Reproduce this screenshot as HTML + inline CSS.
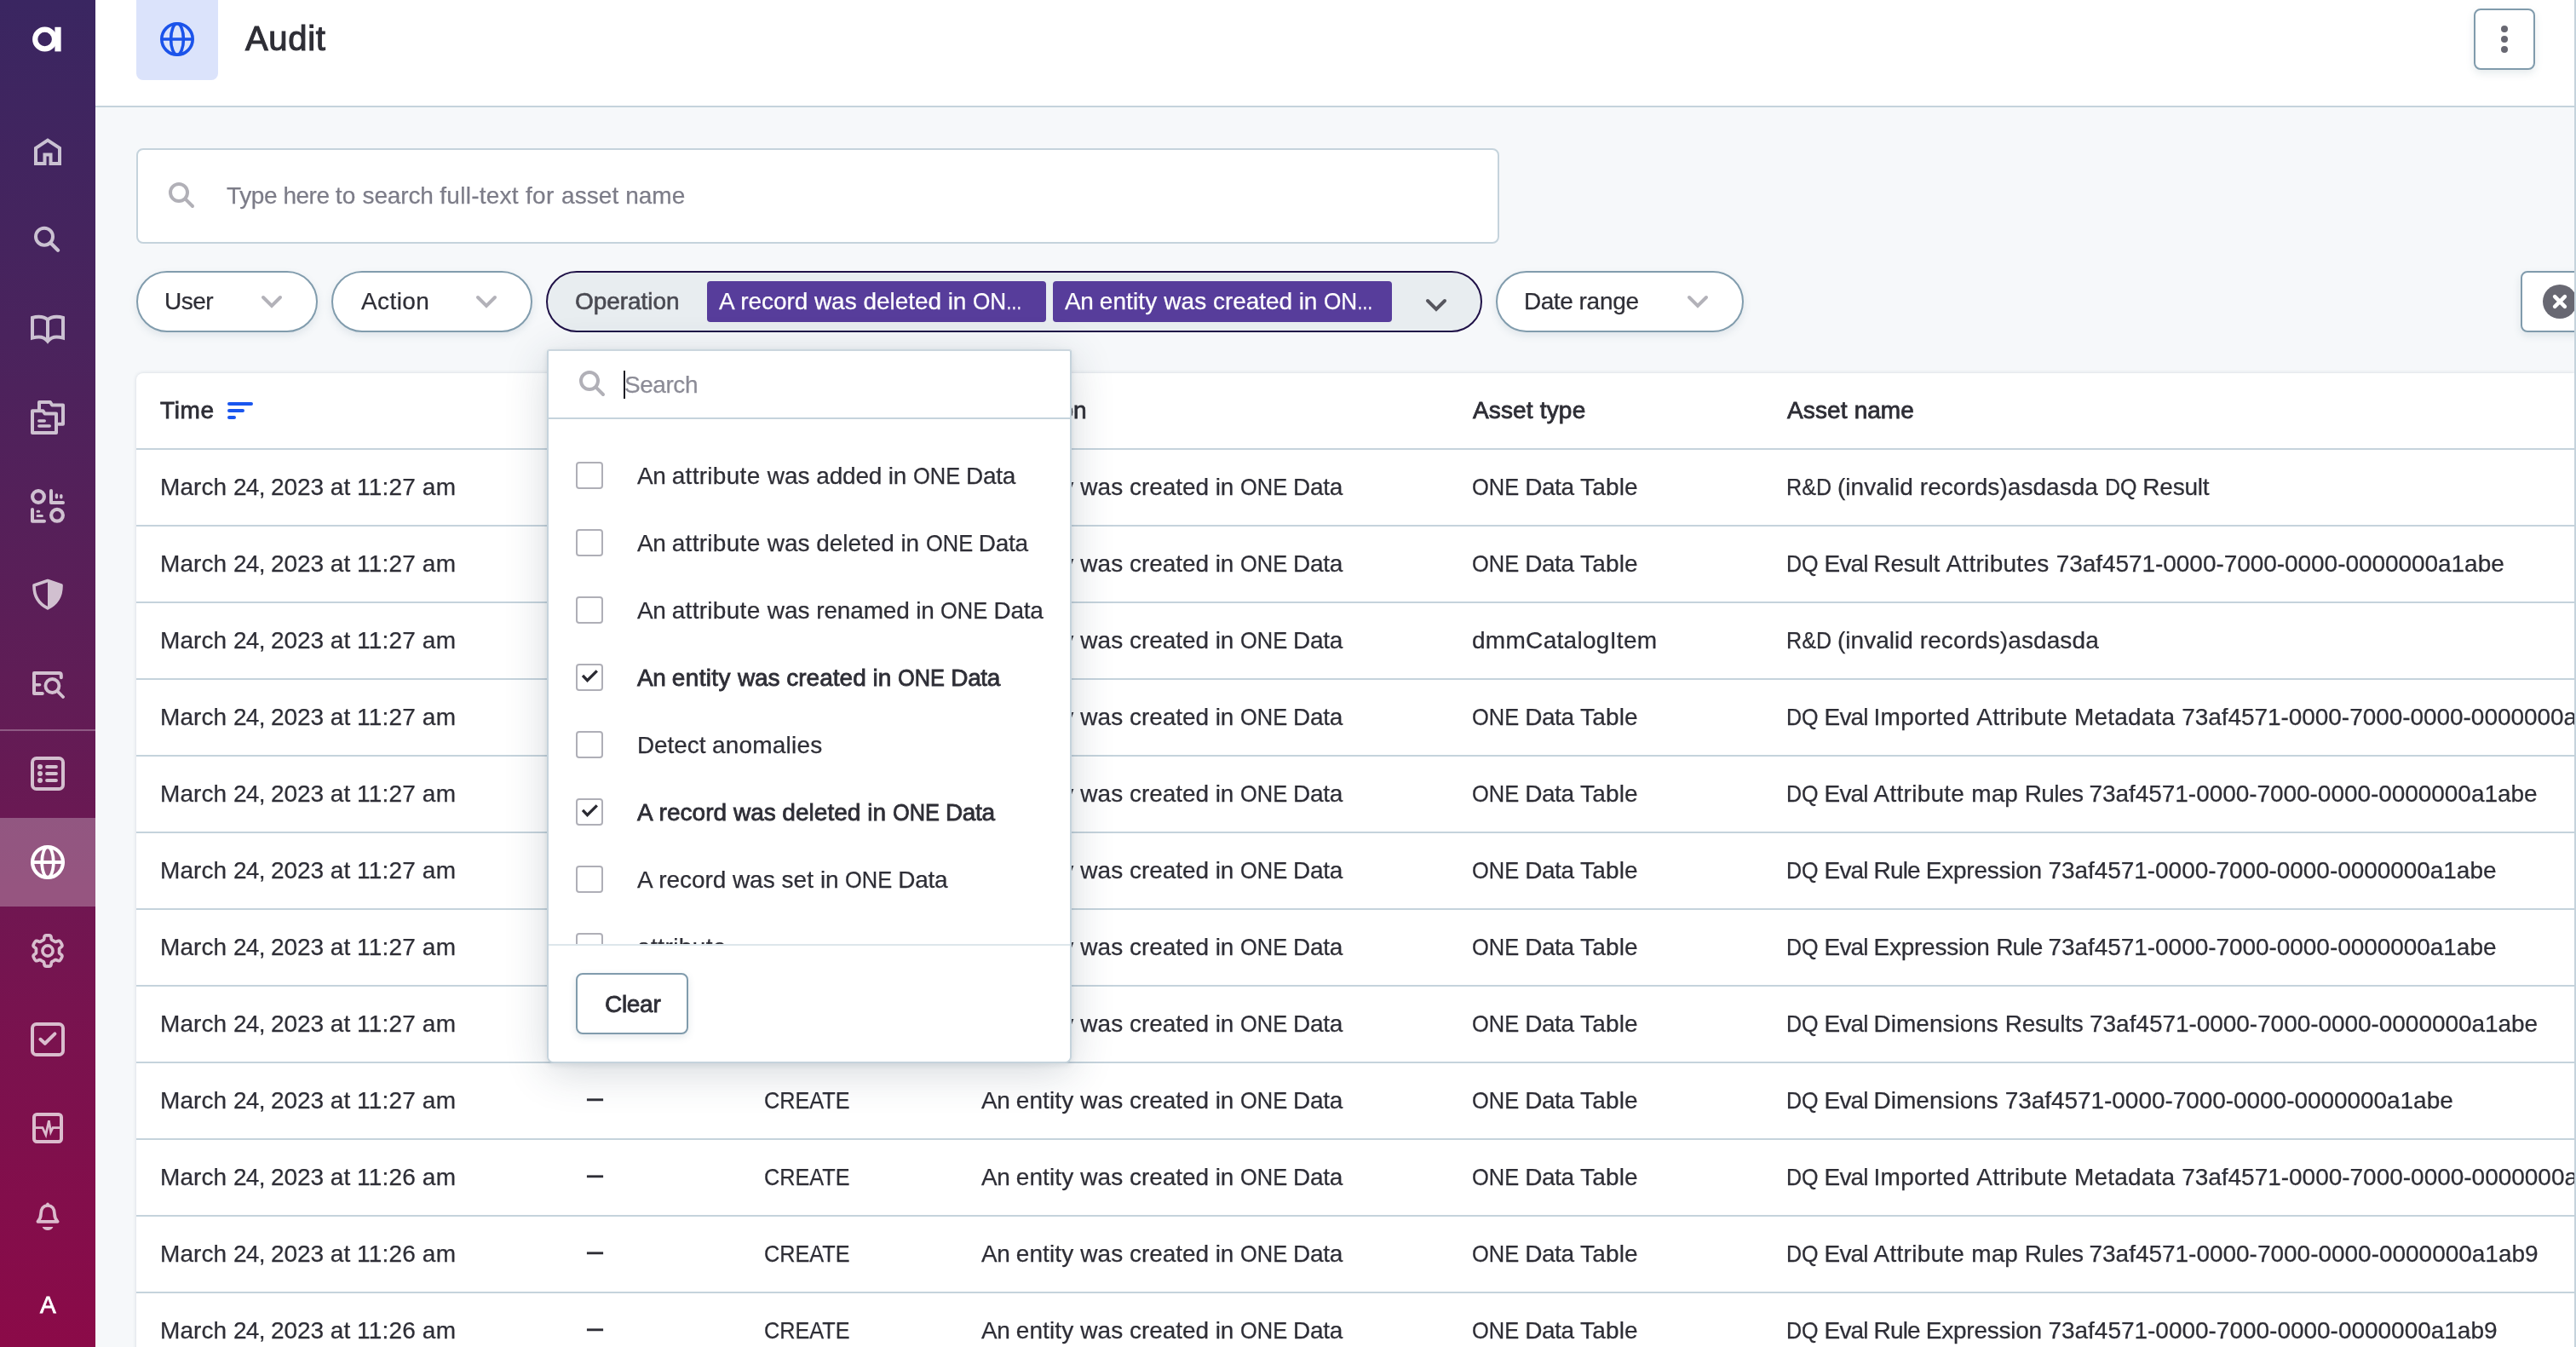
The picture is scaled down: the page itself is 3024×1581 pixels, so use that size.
<!DOCTYPE html>
<html lang="en"><head><meta charset="utf-8"><title>Audit</title>
<style>
html,body{margin:0;padding:0}
body{width:3024px;height:1581px;overflow:hidden;position:relative;background:#f6f8fa;font-family:"Liberation Sans",sans-serif;font-size:28px;color:#2e2e36}
.t{position:absolute;white-space:nowrap;will-change:transform;-webkit-text-stroke:0.25px}
#side{position:absolute;left:0;top:0;width:112px;height:1581px;background:linear-gradient(180deg,#3a2661 0%,#4a235d 25%,#5f1d56 50%,#78134f 75%,#8b0a48 100%)}
.si{position:absolute;left:32px}
#hdr{position:absolute;left:112px;top:0;width:2910px;height:124px;background:#fff;border-bottom:2px solid #c5d3dc}
#redge{position:absolute;left:3022px;top:0;width:2px;height:1581px;background:#c5d3dc}
#ibox{position:absolute;left:160px;top:-8px;width:96px;height:102px;border-radius:8px;background:#dbe3fb}
#kebab{position:absolute;left:2904px;top:10px;width:68px;height:68px;border:2px solid #809bac;border-radius:8px;background:#fff;box-shadow:0 4px 10px rgba(80,110,130,.14)}
#kebab i{position:absolute;left:30px;width:8px;height:8px;border-radius:4px;background:#686872}
#sbox{position:absolute;left:160px;top:174px;width:1596px;height:108px;border:2px solid #c5d3dc;border-radius:8px;background:#fff}
.pill{position:absolute;top:318px;height:68px;border:2px solid #819cad;border-radius:36px;background:#fff;box-shadow:0 4px 10px rgba(80,110,130,.13)}
#oppill{border-color:#1f1147;background:#e8edf0;box-shadow:none}
.chip{position:absolute;top:330px;height:48px;width:398px;border-radius:4px;background:#573d9b}
#clr{position:absolute;left:2959px;top:318px;width:80px;height:68px;border:2px solid #809bac;border-radius:8px;background:#fff;box-shadow:0 4px 10px rgba(80,110,130,.14)}
#table{position:absolute;left:160px;top:438px;width:2862px;height:1200px;background:#fff;border-top-left-radius:8px;box-shadow:0 0 4px rgba(90,110,130,.22)}
.rl{position:absolute;left:160px;width:2862px;height:2px;background:#c5d3dc}
#dd{position:absolute;left:642px;top:410px;width:612px;height:834px;background:#fff;border:2px solid #c5d3dc;border-top-color:#cbd6de;border-radius:3px 3px 8px 8px;box-shadow:0 2px 6px rgba(50,70,90,.12),0 10px 50px rgba(40,60,80,.2);overflow:hidden}
#dd .ln{position:absolute;left:0;width:612px;height:2px;background:#c5d3dc}
.cb{position:absolute;width:28px;height:28px;border:2px solid #afafb7;border-radius:4px;background:#fff}
#clear{position:absolute;left:32px;top:730px;width:128px;height:68px;border:2px solid #809bac;border-radius:8px;background:#fff;box-shadow:0 3px 8px rgba(80,110,130,.16)}
</style></head><body>

<div id="hdr"></div>
<div id="ibox"></div>
<svg style="position:absolute;left:184px;top:22px" width="48" height="48" viewBox="0 0 24 24" fill="none" stroke="#1b53ea" stroke-width="1.8"><circle cx="12" cy="12" r="9.1"/><ellipse cx="12" cy="12" rx="3.7" ry="9.1"/><path d="M3 12 H21"/></svg>
<div class="t" style="left:288px;top:21px;font-size:40px;line-height:48px;color:#2e2e36;"><span style="-webkit-text-stroke:0.8px currentColor;-webkit-text-stroke-width:1.1px;"><span style="letter-spacing:0.69px">Audit</span></span></div>
<div id="kebab"><i style="top:18px"></i><i style="top:30px"></i><i style="top:42px"></i></div>

<div id="sbox"></div>
<svg style="position:absolute;left:194px;top:210px;overflow:visible" width="40" height="40" viewBox="0 0 40 40" fill="none" stroke="#b1b0b7" stroke-width="4" stroke-linecap="round"><circle cx="16" cy="16" r="10"/><path d="M23.87 23.87 L32.00 32.00"/></svg>
<div class="t" style="left:266px;top:214px;font-size:28px;line-height:32px;color:#7c7c88;"><span style="letter-spacing:-0.40px">Type </span><span style="letter-spacing:-0.51px">here </span><span style="letter-spacing:0.22px">to </span><span style="letter-spacing:-0.15px">search </span><span style="letter-spacing:0.25px">full-text </span><span style="letter-spacing:0.42px">for </span><span style="letter-spacing:0.07px">asset </span><span style="letter-spacing:0.02px">name</span></div>

<div class="pill" style="left:160px;width:209px"></div>
<div class="t" style="left:193px;top:338px;font-size:28px;line-height:32px;color:#2e2e36;"><span style="letter-spacing:-0.54px">User</span></div>
<svg style="position:absolute;left:303px;top:342px" width="32" height="24" viewBox="0 0 32 24" fill="none" stroke="#b3b2b9" stroke-width="4" stroke-linecap="round" stroke-linejoin="miter"><path d="M6 7 L16 17 L26 7"/></svg>
<div class="pill" style="left:389px;width:232px"></div>
<div class="t" style="left:424px;top:338px;font-size:28px;line-height:32px;color:#2e2e36;"><span style="letter-spacing:0.42px">Action</span></div>
<svg style="position:absolute;left:555px;top:342px" width="32" height="24" viewBox="0 0 32 24" fill="none" stroke="#b3b2b9" stroke-width="4" stroke-linecap="round" stroke-linejoin="miter"><path d="M6 7 L16 17 L26 7"/></svg>
<div class="pill" id="oppill" style="left:641px;width:1095px"></div>
<div class="t" style="left:675px;top:338px;font-size:28px;line-height:32px;color:#4a4a52;"><span style="-webkit-text-stroke:0.8px currentColor;-webkit-text-stroke-width:0.6px;"><span style="letter-spacing:-0.06px">Operation</span></span></div>
<div class="chip" style="left:830px"></div>
<div class="t" style="left:844px;top:338px;font-size:28px;line-height:32px;color:#fff;"><span style="letter-spacing:0.15px">A </span><span style="letter-spacing:-0.07px">record </span><span style="letter-spacing:0.02px">was </span><span style="letter-spacing:-0.07px">deleted </span><span style="letter-spacing:-0.12px">in </span><span style="display:inline-block;transform:scaleX(0.9345);transform-origin:0 50%;margin-right:-2.75px">ON</span><span style="display:inline-block;transform:scaleX(0.6691);transform-origin:0 50%;margin-right:-9.27px">…</span></div>
<div class="chip" style="left:1236px"></div>
<div class="t" style="left:1250px;top:338px;font-size:28px;line-height:32px;color:#fff;"><span style="letter-spacing:-0.45px">An </span><span style="letter-spacing:0.13px">entity </span><span style="letter-spacing:0.02px">was </span><span style="letter-spacing:-0.06px">created </span><span style="letter-spacing:-0.12px">in </span><span style="display:inline-block;transform:scaleX(0.9345);transform-origin:0 50%;margin-right:-2.75px">ON</span><span style="display:inline-block;transform:scaleX(0.6691);transform-origin:0 50%;margin-right:-9.27px">…</span></div>
<svg style="position:absolute;left:1670px;top:346px" width="32" height="24" viewBox="0 0 32 24" fill="none" stroke="#56565e" stroke-width="4" stroke-linecap="round" stroke-linejoin="miter"><path d="M6 7 L16 17 L26 7"/></svg>
<div class="pill" style="left:1756px;width:287px"></div>
<div class="t" style="left:1789px;top:338px;font-size:28px;line-height:32px;color:#2e2e36;"><span style="letter-spacing:-0.47px">Date </span><span style="letter-spacing:-0.28px">range</span></div>
<svg style="position:absolute;left:1977px;top:342px" width="32" height="24" viewBox="0 0 32 24" fill="none" stroke="#b3b2b9" stroke-width="4" stroke-linecap="round" stroke-linejoin="miter"><path d="M6 7 L16 17 L26 7"/></svg>
<div id="clr"></div>
<svg style="position:absolute;left:2985px;top:334px" width="40" height="40" viewBox="0 0 40 40"><circle cx="20" cy="20" r="20" fill="#686872"/><path d="M14.1 14.1 L25.9 25.9 M25.9 14.1 L14.1 25.9" stroke="#fff" stroke-width="4.5" stroke-linecap="round"/></svg>

<div id="table"></div>
<div class="t" style="left:188.0px;top:466px;font-size:28px;line-height:32px;color:#2e2e36;"><span style="-webkit-text-stroke:0.8px currentColor;"><span style="letter-spacing:0.60px">Time</span></span></div>
<svg style="position:absolute;left:264px;top:468px" width="36" height="28" viewBox="0 0 36 28" fill="none" stroke="#1a56ee" stroke-width="4" stroke-linecap="round"><path d="M5 6 H31 M5 14 H21 M5 22 H11"/></svg>
<div class="t" style="left:688.5px;top:466px;font-size:28px;line-height:32px;color:#2e2e36;"><span style="-webkit-text-stroke:0.8px currentColor;"><span style="letter-spacing:-0.37px">User</span></span></div>
<div class="t" style="left:897px;top:466px;font-size:28px;line-height:32px;color:#2e2e36;"><span style="-webkit-text-stroke:0.8px currentColor;"><span style="letter-spacing:0.55px">Action</span></span></div>
<div class="t" style="left:1152.5px;top:466px;font-size:28px;line-height:32px;color:#2e2e36;"><span style="-webkit-text-stroke:0.8px currentColor;"><span style="letter-spacing:-0.06px">Operation</span></span></div>
<div class="t" style="left:1729px;top:466px;font-size:28px;line-height:32px;color:#2e2e36;"><span style="-webkit-text-stroke:0.8px currentColor;"><span style="letter-spacing:0.14px">Asset </span><span style="letter-spacing:0.21px">type</span></span></div>
<div class="t" style="left:2097.5px;top:466px;font-size:28px;line-height:32px;color:#2e2e36;"><span style="-webkit-text-stroke:0.8px currentColor;"><span style="letter-spacing:0.14px">Asset </span><span style="letter-spacing:0.01px">name</span></span></div>
<div class="rl" style="top:526px"></div>
<div class="t" style="left:187.5px;top:556px;font-size:28px;line-height:32px;color:#2e2e36;"><span style="letter-spacing:0.06px">March </span><span style="letter-spacing:-0.69px">24, </span><span style="letter-spacing:-0.04px">2023 </span><span style="letter-spacing:0.07px">at </span><span style="letter-spacing:0.15px">11:27 </span><span style="letter-spacing:0.45px">am</span></div>
<div class="t" style="left:688.5px;top:556px;font-size:28px;line-height:32px;color:#2e2e36;"><span style="display:inline-block;position:relative;top:-3px;transform:scale(0.68,1.2);transform-origin:0 62%">—</span></div>
<div class="t" style="left:897px;top:556px;font-size:28px;line-height:32px;color:#2e2e36;"><span style="display:inline-block;transform:scaleX(0.9015);transform-origin:0 50%;margin-right:-10.98px">CREATE</span></div>
<div class="t" style="left:1152px;top:556px;font-size:28px;line-height:32px;color:#2e2e36;"><span style="letter-spacing:-0.45px">An </span><span style="letter-spacing:0.13px">entity </span><span style="letter-spacing:0.02px">was </span><span style="letter-spacing:-0.06px">created </span><span style="letter-spacing:-0.12px">in </span><span style="display:inline-block;transform:scaleX(0.9089);transform-origin:0 50%;margin-right:-5.53px">ONE</span><span style="letter-spacing:-0.83px"> </span><span style="letter-spacing:-0.29px">Data</span></div>
<div class="t" style="left:1728px;top:556px;font-size:28px;line-height:32px;color:#2e2e36;"><span style="display:inline-block;transform:scaleX(0.9089);transform-origin:0 50%;margin-right:-5.53px">ONE</span><span style="letter-spacing:-0.83px"> </span><span style="letter-spacing:-0.40px">Data </span><span style="letter-spacing:0.17px">Table</span></div>
<div class="t" style="left:2097px;top:556px;font-size:28px;line-height:32px;color:#2e2e36;"><span style="display:inline-block;transform:scaleX(0.8972);transform-origin:0 50%;margin-right:-6.08px">R&amp;D</span><span style="letter-spacing:-0.83px"> </span><span style="letter-spacing:0.03px">(invalid </span><span style="letter-spacing:0.04px">records)asdasda </span><span style="display:inline-block;transform:scaleX(0.8962);transform-origin:0 50%;margin-right:-4.36px">DQ</span><span style="letter-spacing:-0.83px"> </span><span style="letter-spacing:-0.23px">Result</span></div>
<div class="rl" style="top:616px"></div>
<div class="t" style="left:187.5px;top:646px;font-size:28px;line-height:32px;color:#2e2e36;"><span style="letter-spacing:0.06px">March </span><span style="letter-spacing:-0.69px">24, </span><span style="letter-spacing:-0.04px">2023 </span><span style="letter-spacing:0.07px">at </span><span style="letter-spacing:0.15px">11:27 </span><span style="letter-spacing:0.45px">am</span></div>
<div class="t" style="left:688.5px;top:646px;font-size:28px;line-height:32px;color:#2e2e36;"><span style="display:inline-block;position:relative;top:-3px;transform:scale(0.68,1.2);transform-origin:0 62%">—</span></div>
<div class="t" style="left:897px;top:646px;font-size:28px;line-height:32px;color:#2e2e36;"><span style="display:inline-block;transform:scaleX(0.9015);transform-origin:0 50%;margin-right:-10.98px">CREATE</span></div>
<div class="t" style="left:1152px;top:646px;font-size:28px;line-height:32px;color:#2e2e36;"><span style="letter-spacing:-0.45px">An </span><span style="letter-spacing:0.13px">entity </span><span style="letter-spacing:0.02px">was </span><span style="letter-spacing:-0.06px">created </span><span style="letter-spacing:-0.12px">in </span><span style="display:inline-block;transform:scaleX(0.9089);transform-origin:0 50%;margin-right:-5.53px">ONE</span><span style="letter-spacing:-0.83px"> </span><span style="letter-spacing:-0.29px">Data</span></div>
<div class="t" style="left:1728px;top:646px;font-size:28px;line-height:32px;color:#2e2e36;"><span style="display:inline-block;transform:scaleX(0.9089);transform-origin:0 50%;margin-right:-5.53px">ONE</span><span style="letter-spacing:-0.83px"> </span><span style="letter-spacing:-0.40px">Data </span><span style="letter-spacing:0.17px">Table</span></div>
<div class="t" style="left:2097px;top:646px;font-size:28px;line-height:32px;color:#2e2e36;"><span style="display:inline-block;transform:scaleX(0.8962);transform-origin:0 50%;margin-right:-4.36px">DQ</span><span style="letter-spacing:-0.83px"> </span><span style="letter-spacing:-0.87px">Eval </span><span style="letter-spacing:-0.32px">Result </span><span style="letter-spacing:0.29px">Attributes </span><span style="letter-spacing:-0.05px">73af4571-0000-7000-0000-0000000a1abe</span></div>
<div class="rl" style="top:706px"></div>
<div class="t" style="left:187.5px;top:736px;font-size:28px;line-height:32px;color:#2e2e36;"><span style="letter-spacing:0.06px">March </span><span style="letter-spacing:-0.69px">24, </span><span style="letter-spacing:-0.04px">2023 </span><span style="letter-spacing:0.07px">at </span><span style="letter-spacing:0.15px">11:27 </span><span style="letter-spacing:0.45px">am</span></div>
<div class="t" style="left:688.5px;top:736px;font-size:28px;line-height:32px;color:#2e2e36;"><span style="display:inline-block;position:relative;top:-3px;transform:scale(0.68,1.2);transform-origin:0 62%">—</span></div>
<div class="t" style="left:897px;top:736px;font-size:28px;line-height:32px;color:#2e2e36;"><span style="display:inline-block;transform:scaleX(0.9015);transform-origin:0 50%;margin-right:-10.98px">CREATE</span></div>
<div class="t" style="left:1152px;top:736px;font-size:28px;line-height:32px;color:#2e2e36;"><span style="letter-spacing:-0.45px">An </span><span style="letter-spacing:0.13px">entity </span><span style="letter-spacing:0.02px">was </span><span style="letter-spacing:-0.06px">created </span><span style="letter-spacing:-0.12px">in </span><span style="display:inline-block;transform:scaleX(0.9089);transform-origin:0 50%;margin-right:-5.53px">ONE</span><span style="letter-spacing:-0.83px"> </span><span style="letter-spacing:-0.29px">Data</span></div>
<div class="t" style="left:1728px;top:736px;font-size:28px;line-height:32px;color:#2e2e36;"><span style="letter-spacing:0.30px">dmmCatalogItem</span></div>
<div class="t" style="left:2097px;top:736px;font-size:28px;line-height:32px;color:#2e2e36;"><span style="display:inline-block;transform:scaleX(0.8972);transform-origin:0 50%;margin-right:-6.08px">R&amp;D</span><span style="letter-spacing:-0.83px"> </span><span style="letter-spacing:0.03px">(invalid </span><span style="letter-spacing:0.10px">records)asdasda</span></div>
<div class="rl" style="top:796px"></div>
<div class="t" style="left:187.5px;top:826px;font-size:28px;line-height:32px;color:#2e2e36;"><span style="letter-spacing:0.06px">March </span><span style="letter-spacing:-0.69px">24, </span><span style="letter-spacing:-0.04px">2023 </span><span style="letter-spacing:0.07px">at </span><span style="letter-spacing:0.15px">11:27 </span><span style="letter-spacing:0.45px">am</span></div>
<div class="t" style="left:688.5px;top:826px;font-size:28px;line-height:32px;color:#2e2e36;"><span style="display:inline-block;position:relative;top:-3px;transform:scale(0.68,1.2);transform-origin:0 62%">—</span></div>
<div class="t" style="left:897px;top:826px;font-size:28px;line-height:32px;color:#2e2e36;"><span style="display:inline-block;transform:scaleX(0.9015);transform-origin:0 50%;margin-right:-10.98px">CREATE</span></div>
<div class="t" style="left:1152px;top:826px;font-size:28px;line-height:32px;color:#2e2e36;"><span style="letter-spacing:-0.45px">An </span><span style="letter-spacing:0.13px">entity </span><span style="letter-spacing:0.02px">was </span><span style="letter-spacing:-0.06px">created </span><span style="letter-spacing:-0.12px">in </span><span style="display:inline-block;transform:scaleX(0.9089);transform-origin:0 50%;margin-right:-5.53px">ONE</span><span style="letter-spacing:-0.83px"> </span><span style="letter-spacing:-0.29px">Data</span></div>
<div class="t" style="left:1728px;top:826px;font-size:28px;line-height:32px;color:#2e2e36;"><span style="display:inline-block;transform:scaleX(0.9089);transform-origin:0 50%;margin-right:-5.53px">ONE</span><span style="letter-spacing:-0.83px"> </span><span style="letter-spacing:-0.40px">Data </span><span style="letter-spacing:0.17px">Table</span></div>
<div class="t" style="left:2097px;top:826px;font-size:28px;line-height:32px;color:#2e2e36;"><span style="display:inline-block;transform:scaleX(0.8962);transform-origin:0 50%;margin-right:-4.36px">DQ</span><span style="letter-spacing:-0.83px"> </span><span style="letter-spacing:-0.87px">Eval </span><span style="letter-spacing:0.28px">Imported </span><span style="letter-spacing:0.27px">Attribute </span><span style="letter-spacing:0.17px">Metadata </span><span style="letter-spacing:-0.05px">73af4571-0000-7000-0000-0000000a1abe</span></div>
<div class="rl" style="top:886px"></div>
<div class="t" style="left:187.5px;top:916px;font-size:28px;line-height:32px;color:#2e2e36;"><span style="letter-spacing:0.06px">March </span><span style="letter-spacing:-0.69px">24, </span><span style="letter-spacing:-0.04px">2023 </span><span style="letter-spacing:0.07px">at </span><span style="letter-spacing:0.15px">11:27 </span><span style="letter-spacing:0.45px">am</span></div>
<div class="t" style="left:688.5px;top:916px;font-size:28px;line-height:32px;color:#2e2e36;"><span style="display:inline-block;position:relative;top:-3px;transform:scale(0.68,1.2);transform-origin:0 62%">—</span></div>
<div class="t" style="left:897px;top:916px;font-size:28px;line-height:32px;color:#2e2e36;"><span style="display:inline-block;transform:scaleX(0.9015);transform-origin:0 50%;margin-right:-10.98px">CREATE</span></div>
<div class="t" style="left:1152px;top:916px;font-size:28px;line-height:32px;color:#2e2e36;"><span style="letter-spacing:-0.45px">An </span><span style="letter-spacing:0.13px">entity </span><span style="letter-spacing:0.02px">was </span><span style="letter-spacing:-0.06px">created </span><span style="letter-spacing:-0.12px">in </span><span style="display:inline-block;transform:scaleX(0.9089);transform-origin:0 50%;margin-right:-5.53px">ONE</span><span style="letter-spacing:-0.83px"> </span><span style="letter-spacing:-0.29px">Data</span></div>
<div class="t" style="left:1728px;top:916px;font-size:28px;line-height:32px;color:#2e2e36;"><span style="display:inline-block;transform:scaleX(0.9089);transform-origin:0 50%;margin-right:-5.53px">ONE</span><span style="letter-spacing:-0.83px"> </span><span style="letter-spacing:-0.40px">Data </span><span style="letter-spacing:0.17px">Table</span></div>
<div class="t" style="left:2097px;top:916px;font-size:28px;line-height:32px;color:#2e2e36;"><span style="display:inline-block;transform:scaleX(0.8962);transform-origin:0 50%;margin-right:-4.36px">DQ</span><span style="letter-spacing:-0.83px"> </span><span style="letter-spacing:-0.87px">Eval </span><span style="letter-spacing:0.27px">Attribute </span><span style="letter-spacing:0.05px">map </span><span style="letter-spacing:-0.60px">Rules </span><span style="letter-spacing:-0.05px">73af4571-0000-7000-0000-0000000a1abe</span></div>
<div class="rl" style="top:976px"></div>
<div class="t" style="left:187.5px;top:1006px;font-size:28px;line-height:32px;color:#2e2e36;"><span style="letter-spacing:0.06px">March </span><span style="letter-spacing:-0.69px">24, </span><span style="letter-spacing:-0.04px">2023 </span><span style="letter-spacing:0.07px">at </span><span style="letter-spacing:0.15px">11:27 </span><span style="letter-spacing:0.45px">am</span></div>
<div class="t" style="left:688.5px;top:1006px;font-size:28px;line-height:32px;color:#2e2e36;"><span style="display:inline-block;position:relative;top:-3px;transform:scale(0.68,1.2);transform-origin:0 62%">—</span></div>
<div class="t" style="left:897px;top:1006px;font-size:28px;line-height:32px;color:#2e2e36;"><span style="display:inline-block;transform:scaleX(0.9015);transform-origin:0 50%;margin-right:-10.98px">CREATE</span></div>
<div class="t" style="left:1152px;top:1006px;font-size:28px;line-height:32px;color:#2e2e36;"><span style="letter-spacing:-0.45px">An </span><span style="letter-spacing:0.13px">entity </span><span style="letter-spacing:0.02px">was </span><span style="letter-spacing:-0.06px">created </span><span style="letter-spacing:-0.12px">in </span><span style="display:inline-block;transform:scaleX(0.9089);transform-origin:0 50%;margin-right:-5.53px">ONE</span><span style="letter-spacing:-0.83px"> </span><span style="letter-spacing:-0.29px">Data</span></div>
<div class="t" style="left:1728px;top:1006px;font-size:28px;line-height:32px;color:#2e2e36;"><span style="display:inline-block;transform:scaleX(0.9089);transform-origin:0 50%;margin-right:-5.53px">ONE</span><span style="letter-spacing:-0.83px"> </span><span style="letter-spacing:-0.40px">Data </span><span style="letter-spacing:0.17px">Table</span></div>
<div class="t" style="left:2097px;top:1006px;font-size:28px;line-height:32px;color:#2e2e36;"><span style="display:inline-block;transform:scaleX(0.8962);transform-origin:0 50%;margin-right:-4.36px">DQ</span><span style="letter-spacing:-0.83px"> </span><span style="letter-spacing:-0.87px">Eval </span><span style="letter-spacing:-0.82px">Rule </span><span style="letter-spacing:-0.24px">Expression </span><span style="letter-spacing:-0.05px">73af4571-0000-7000-0000-0000000a1abe</span></div>
<div class="rl" style="top:1066px"></div>
<div class="t" style="left:187.5px;top:1096px;font-size:28px;line-height:32px;color:#2e2e36;"><span style="letter-spacing:0.06px">March </span><span style="letter-spacing:-0.69px">24, </span><span style="letter-spacing:-0.04px">2023 </span><span style="letter-spacing:0.07px">at </span><span style="letter-spacing:0.15px">11:27 </span><span style="letter-spacing:0.45px">am</span></div>
<div class="t" style="left:688.5px;top:1096px;font-size:28px;line-height:32px;color:#2e2e36;"><span style="display:inline-block;position:relative;top:-3px;transform:scale(0.68,1.2);transform-origin:0 62%">—</span></div>
<div class="t" style="left:897px;top:1096px;font-size:28px;line-height:32px;color:#2e2e36;"><span style="display:inline-block;transform:scaleX(0.9015);transform-origin:0 50%;margin-right:-10.98px">CREATE</span></div>
<div class="t" style="left:1152px;top:1096px;font-size:28px;line-height:32px;color:#2e2e36;"><span style="letter-spacing:-0.45px">An </span><span style="letter-spacing:0.13px">entity </span><span style="letter-spacing:0.02px">was </span><span style="letter-spacing:-0.06px">created </span><span style="letter-spacing:-0.12px">in </span><span style="display:inline-block;transform:scaleX(0.9089);transform-origin:0 50%;margin-right:-5.53px">ONE</span><span style="letter-spacing:-0.83px"> </span><span style="letter-spacing:-0.29px">Data</span></div>
<div class="t" style="left:1728px;top:1096px;font-size:28px;line-height:32px;color:#2e2e36;"><span style="display:inline-block;transform:scaleX(0.9089);transform-origin:0 50%;margin-right:-5.53px">ONE</span><span style="letter-spacing:-0.83px"> </span><span style="letter-spacing:-0.40px">Data </span><span style="letter-spacing:0.17px">Table</span></div>
<div class="t" style="left:2097px;top:1096px;font-size:28px;line-height:32px;color:#2e2e36;"><span style="display:inline-block;transform:scaleX(0.8962);transform-origin:0 50%;margin-right:-4.36px">DQ</span><span style="letter-spacing:-0.83px"> </span><span style="letter-spacing:-0.87px">Eval </span><span style="letter-spacing:-0.24px">Expression </span><span style="letter-spacing:-0.82px">Rule </span><span style="letter-spacing:-0.05px">73af4571-0000-7000-0000-0000000a1abe</span></div>
<div class="rl" style="top:1156px"></div>
<div class="t" style="left:187.5px;top:1186px;font-size:28px;line-height:32px;color:#2e2e36;"><span style="letter-spacing:0.06px">March </span><span style="letter-spacing:-0.69px">24, </span><span style="letter-spacing:-0.04px">2023 </span><span style="letter-spacing:0.07px">at </span><span style="letter-spacing:0.15px">11:27 </span><span style="letter-spacing:0.45px">am</span></div>
<div class="t" style="left:688.5px;top:1186px;font-size:28px;line-height:32px;color:#2e2e36;"><span style="display:inline-block;position:relative;top:-3px;transform:scale(0.68,1.2);transform-origin:0 62%">—</span></div>
<div class="t" style="left:897px;top:1186px;font-size:28px;line-height:32px;color:#2e2e36;"><span style="display:inline-block;transform:scaleX(0.9015);transform-origin:0 50%;margin-right:-10.98px">CREATE</span></div>
<div class="t" style="left:1152px;top:1186px;font-size:28px;line-height:32px;color:#2e2e36;"><span style="letter-spacing:-0.45px">An </span><span style="letter-spacing:0.13px">entity </span><span style="letter-spacing:0.02px">was </span><span style="letter-spacing:-0.06px">created </span><span style="letter-spacing:-0.12px">in </span><span style="display:inline-block;transform:scaleX(0.9089);transform-origin:0 50%;margin-right:-5.53px">ONE</span><span style="letter-spacing:-0.83px"> </span><span style="letter-spacing:-0.29px">Data</span></div>
<div class="t" style="left:1728px;top:1186px;font-size:28px;line-height:32px;color:#2e2e36;"><span style="display:inline-block;transform:scaleX(0.9089);transform-origin:0 50%;margin-right:-5.53px">ONE</span><span style="letter-spacing:-0.83px"> </span><span style="letter-spacing:-0.40px">Data </span><span style="letter-spacing:0.17px">Table</span></div>
<div class="t" style="left:2097px;top:1186px;font-size:28px;line-height:32px;color:#2e2e36;"><span style="display:inline-block;transform:scaleX(0.8962);transform-origin:0 50%;margin-right:-4.36px">DQ</span><span style="letter-spacing:-0.83px"> </span><span style="letter-spacing:-0.87px">Eval </span><span style="letter-spacing:0.01px">Dimensions </span><span style="letter-spacing:-0.22px">Results </span><span style="letter-spacing:-0.05px">73af4571-0000-7000-0000-0000000a1abe</span></div>
<div class="rl" style="top:1246px"></div>
<div class="t" style="left:187.5px;top:1276px;font-size:28px;line-height:32px;color:#2e2e36;"><span style="letter-spacing:0.06px">March </span><span style="letter-spacing:-0.69px">24, </span><span style="letter-spacing:-0.04px">2023 </span><span style="letter-spacing:0.07px">at </span><span style="letter-spacing:0.15px">11:27 </span><span style="letter-spacing:0.45px">am</span></div>
<div class="t" style="left:688.5px;top:1276px;font-size:28px;line-height:32px;color:#2e2e36;"><span style="display:inline-block;position:relative;top:-3px;transform:scale(0.68,1.2);transform-origin:0 62%">—</span></div>
<div class="t" style="left:897px;top:1276px;font-size:28px;line-height:32px;color:#2e2e36;"><span style="display:inline-block;transform:scaleX(0.9015);transform-origin:0 50%;margin-right:-10.98px">CREATE</span></div>
<div class="t" style="left:1152px;top:1276px;font-size:28px;line-height:32px;color:#2e2e36;"><span style="letter-spacing:-0.45px">An </span><span style="letter-spacing:0.13px">entity </span><span style="letter-spacing:0.02px">was </span><span style="letter-spacing:-0.06px">created </span><span style="letter-spacing:-0.12px">in </span><span style="display:inline-block;transform:scaleX(0.9089);transform-origin:0 50%;margin-right:-5.53px">ONE</span><span style="letter-spacing:-0.83px"> </span><span style="letter-spacing:-0.29px">Data</span></div>
<div class="t" style="left:1728px;top:1276px;font-size:28px;line-height:32px;color:#2e2e36;"><span style="display:inline-block;transform:scaleX(0.9089);transform-origin:0 50%;margin-right:-5.53px">ONE</span><span style="letter-spacing:-0.83px"> </span><span style="letter-spacing:-0.40px">Data </span><span style="letter-spacing:0.17px">Table</span></div>
<div class="t" style="left:2097px;top:1276px;font-size:28px;line-height:32px;color:#2e2e36;"><span style="display:inline-block;transform:scaleX(0.8962);transform-origin:0 50%;margin-right:-4.36px">DQ</span><span style="letter-spacing:-0.83px"> </span><span style="letter-spacing:-0.87px">Eval </span><span style="letter-spacing:0.01px">Dimensions </span><span style="letter-spacing:-0.05px">73af4571-0000-7000-0000-0000000a1abe</span></div>
<div class="rl" style="top:1336px"></div>
<div class="t" style="left:187.5px;top:1366px;font-size:28px;line-height:32px;color:#2e2e36;"><span style="letter-spacing:0.06px">March </span><span style="letter-spacing:-0.69px">24, </span><span style="letter-spacing:-0.04px">2023 </span><span style="letter-spacing:0.07px">at </span><span style="letter-spacing:0.15px">11:26 </span><span style="letter-spacing:0.45px">am</span></div>
<div class="t" style="left:688.5px;top:1366px;font-size:28px;line-height:32px;color:#2e2e36;"><span style="display:inline-block;position:relative;top:-3px;transform:scale(0.68,1.2);transform-origin:0 62%">—</span></div>
<div class="t" style="left:897px;top:1366px;font-size:28px;line-height:32px;color:#2e2e36;"><span style="display:inline-block;transform:scaleX(0.9015);transform-origin:0 50%;margin-right:-10.98px">CREATE</span></div>
<div class="t" style="left:1152px;top:1366px;font-size:28px;line-height:32px;color:#2e2e36;"><span style="letter-spacing:-0.45px">An </span><span style="letter-spacing:0.13px">entity </span><span style="letter-spacing:0.02px">was </span><span style="letter-spacing:-0.06px">created </span><span style="letter-spacing:-0.12px">in </span><span style="display:inline-block;transform:scaleX(0.9089);transform-origin:0 50%;margin-right:-5.53px">ONE</span><span style="letter-spacing:-0.83px"> </span><span style="letter-spacing:-0.29px">Data</span></div>
<div class="t" style="left:1728px;top:1366px;font-size:28px;line-height:32px;color:#2e2e36;"><span style="display:inline-block;transform:scaleX(0.9089);transform-origin:0 50%;margin-right:-5.53px">ONE</span><span style="letter-spacing:-0.83px"> </span><span style="letter-spacing:-0.40px">Data </span><span style="letter-spacing:0.17px">Table</span></div>
<div class="t" style="left:2097px;top:1366px;font-size:28px;line-height:32px;color:#2e2e36;"><span style="display:inline-block;transform:scaleX(0.8962);transform-origin:0 50%;margin-right:-4.36px">DQ</span><span style="letter-spacing:-0.83px"> </span><span style="letter-spacing:-0.87px">Eval </span><span style="letter-spacing:0.28px">Imported </span><span style="letter-spacing:0.27px">Attribute </span><span style="letter-spacing:0.17px">Metadata </span><span style="letter-spacing:-0.02px">73af4571-0000-7000-0000-0000000a1ab9</span></div>
<div class="rl" style="top:1426px"></div>
<div class="t" style="left:187.5px;top:1456px;font-size:28px;line-height:32px;color:#2e2e36;"><span style="letter-spacing:0.06px">March </span><span style="letter-spacing:-0.69px">24, </span><span style="letter-spacing:-0.04px">2023 </span><span style="letter-spacing:0.07px">at </span><span style="letter-spacing:0.15px">11:26 </span><span style="letter-spacing:0.45px">am</span></div>
<div class="t" style="left:688.5px;top:1456px;font-size:28px;line-height:32px;color:#2e2e36;"><span style="display:inline-block;position:relative;top:-3px;transform:scale(0.68,1.2);transform-origin:0 62%">—</span></div>
<div class="t" style="left:897px;top:1456px;font-size:28px;line-height:32px;color:#2e2e36;"><span style="display:inline-block;transform:scaleX(0.9015);transform-origin:0 50%;margin-right:-10.98px">CREATE</span></div>
<div class="t" style="left:1152px;top:1456px;font-size:28px;line-height:32px;color:#2e2e36;"><span style="letter-spacing:-0.45px">An </span><span style="letter-spacing:0.13px">entity </span><span style="letter-spacing:0.02px">was </span><span style="letter-spacing:-0.06px">created </span><span style="letter-spacing:-0.12px">in </span><span style="display:inline-block;transform:scaleX(0.9089);transform-origin:0 50%;margin-right:-5.53px">ONE</span><span style="letter-spacing:-0.83px"> </span><span style="letter-spacing:-0.29px">Data</span></div>
<div class="t" style="left:1728px;top:1456px;font-size:28px;line-height:32px;color:#2e2e36;"><span style="display:inline-block;transform:scaleX(0.9089);transform-origin:0 50%;margin-right:-5.53px">ONE</span><span style="letter-spacing:-0.83px"> </span><span style="letter-spacing:-0.40px">Data </span><span style="letter-spacing:0.17px">Table</span></div>
<div class="t" style="left:2097px;top:1456px;font-size:28px;line-height:32px;color:#2e2e36;"><span style="display:inline-block;transform:scaleX(0.8962);transform-origin:0 50%;margin-right:-4.36px">DQ</span><span style="letter-spacing:-0.83px"> </span><span style="letter-spacing:-0.87px">Eval </span><span style="letter-spacing:0.27px">Attribute </span><span style="letter-spacing:0.05px">map </span><span style="letter-spacing:-0.60px">Rules </span><span style="letter-spacing:-0.02px">73af4571-0000-7000-0000-0000000a1ab9</span></div>
<div class="rl" style="top:1516px"></div>
<div class="t" style="left:187.5px;top:1546px;font-size:28px;line-height:32px;color:#2e2e36;"><span style="letter-spacing:0.06px">March </span><span style="letter-spacing:-0.69px">24, </span><span style="letter-spacing:-0.04px">2023 </span><span style="letter-spacing:0.07px">at </span><span style="letter-spacing:0.15px">11:26 </span><span style="letter-spacing:0.45px">am</span></div>
<div class="t" style="left:688.5px;top:1546px;font-size:28px;line-height:32px;color:#2e2e36;"><span style="display:inline-block;position:relative;top:-3px;transform:scale(0.68,1.2);transform-origin:0 62%">—</span></div>
<div class="t" style="left:897px;top:1546px;font-size:28px;line-height:32px;color:#2e2e36;"><span style="display:inline-block;transform:scaleX(0.9015);transform-origin:0 50%;margin-right:-10.98px">CREATE</span></div>
<div class="t" style="left:1152px;top:1546px;font-size:28px;line-height:32px;color:#2e2e36;"><span style="letter-spacing:-0.45px">An </span><span style="letter-spacing:0.13px">entity </span><span style="letter-spacing:0.02px">was </span><span style="letter-spacing:-0.06px">created </span><span style="letter-spacing:-0.12px">in </span><span style="display:inline-block;transform:scaleX(0.9089);transform-origin:0 50%;margin-right:-5.53px">ONE</span><span style="letter-spacing:-0.83px"> </span><span style="letter-spacing:-0.29px">Data</span></div>
<div class="t" style="left:1728px;top:1546px;font-size:28px;line-height:32px;color:#2e2e36;"><span style="display:inline-block;transform:scaleX(0.9089);transform-origin:0 50%;margin-right:-5.53px">ONE</span><span style="letter-spacing:-0.83px"> </span><span style="letter-spacing:-0.40px">Data </span><span style="letter-spacing:0.17px">Table</span></div>
<div class="t" style="left:2097px;top:1546px;font-size:28px;line-height:32px;color:#2e2e36;"><span style="display:inline-block;transform:scaleX(0.8962);transform-origin:0 50%;margin-right:-4.36px">DQ</span><span style="letter-spacing:-0.83px"> </span><span style="letter-spacing:-0.87px">Eval </span><span style="letter-spacing:-0.82px">Rule </span><span style="letter-spacing:-0.24px">Expression </span><span style="letter-spacing:-0.02px">73af4571-0000-7000-0000-0000000a1ab9</span></div>
<div class="rl" style="top:1606px"></div>
<div class="t" style="left:187.5px;top:1636px;font-size:28px;line-height:32px;color:#2e2e36;"><span style="letter-spacing:0.06px">March </span><span style="letter-spacing:-0.69px">24, </span><span style="letter-spacing:-0.04px">2023 </span><span style="letter-spacing:0.07px">at </span><span style="letter-spacing:0.15px">11:26 </span><span style="letter-spacing:0.45px">am</span></div>
<div class="t" style="left:688.5px;top:1636px;font-size:28px;line-height:32px;color:#2e2e36;"><span style="display:inline-block;position:relative;top:-3px;transform:scale(0.68,1.2);transform-origin:0 62%">—</span></div>
<div class="t" style="left:897px;top:1636px;font-size:28px;line-height:32px;color:#2e2e36;"><span style="display:inline-block;transform:scaleX(0.9015);transform-origin:0 50%;margin-right:-10.98px">CREATE</span></div>
<div class="t" style="left:1152px;top:1636px;font-size:28px;line-height:32px;color:#2e2e36;"><span style="letter-spacing:-0.45px">An </span><span style="letter-spacing:0.13px">entity </span><span style="letter-spacing:0.02px">was </span><span style="letter-spacing:-0.06px">created </span><span style="letter-spacing:-0.12px">in </span><span style="display:inline-block;transform:scaleX(0.9089);transform-origin:0 50%;margin-right:-5.53px">ONE</span><span style="letter-spacing:-0.83px"> </span><span style="letter-spacing:-0.29px">Data</span></div>
<div class="t" style="left:1728px;top:1636px;font-size:28px;line-height:32px;color:#2e2e36;"><span style="display:inline-block;transform:scaleX(0.9089);transform-origin:0 50%;margin-right:-5.53px">ONE</span><span style="letter-spacing:-0.83px"> </span><span style="letter-spacing:-0.40px">Data </span><span style="letter-spacing:0.17px">Table</span></div>
<div class="t" style="left:2097px;top:1636px;font-size:28px;line-height:32px;color:#2e2e36;"><span style="display:inline-block;transform:scaleX(0.8962);transform-origin:0 50%;margin-right:-4.36px">DQ</span><span style="letter-spacing:-0.83px"> </span><span style="letter-spacing:-0.87px">Eval </span><span style="letter-spacing:-0.24px">Expression </span><span style="letter-spacing:-0.82px">Rule </span><span style="letter-spacing:-0.02px">73af4571-0000-7000-0000-0000000a1ab9</span></div>

<div id="dd">
<svg style="position:absolute;left:32px;top:19px;overflow:visible" width="40" height="40" viewBox="0 0 40 40" fill="none" stroke="#b1b0b7" stroke-width="4" stroke-linecap="round"><circle cx="16" cy="16" r="10"/><path d="M23.87 23.87 L32.00 32.00"/></svg>
<div style="position:absolute;left:88px;top:23px;width:2px;height:33px;background:#1b1b22"></div>
<div class="t" style="left:88.5px;top:24px;font-size:28px;line-height:32px;color:#8b8b96;"><span style="letter-spacing:-0.45px">Search</span></div>
<div class="ln" style="top:78px"></div>
<div class="cb" style="left:32px;top:130px"></div>
<div class="t" style="left:104px;top:131px;font-size:28px;line-height:32px;color:#2e2e36;"><span style="letter-spacing:-0.45px">An </span><span style="letter-spacing:0.30px">attribute </span><span style="letter-spacing:0.02px">was </span><span style="letter-spacing:-0.21px">added </span><span style="letter-spacing:-0.12px">in </span><span style="display:inline-block;transform:scaleX(0.9089);transform-origin:0 50%;margin-right:-5.53px">ONE</span><span style="letter-spacing:-0.83px"> </span><span style="letter-spacing:-0.29px">Data</span></div>
<div class="cb" style="left:32px;top:209px"></div>
<div class="t" style="left:104px;top:210px;font-size:28px;line-height:32px;color:#2e2e36;"><span style="letter-spacing:-0.45px">An </span><span style="letter-spacing:0.30px">attribute </span><span style="letter-spacing:0.02px">was </span><span style="letter-spacing:-0.07px">deleted </span><span style="letter-spacing:-0.12px">in </span><span style="display:inline-block;transform:scaleX(0.9089);transform-origin:0 50%;margin-right:-5.53px">ONE</span><span style="letter-spacing:-0.83px"> </span><span style="letter-spacing:-0.29px">Data</span></div>
<div class="cb" style="left:32px;top:288px"></div>
<div class="t" style="left:104px;top:289px;font-size:28px;line-height:32px;color:#2e2e36;"><span style="letter-spacing:-0.45px">An </span><span style="letter-spacing:0.30px">attribute </span><span style="letter-spacing:0.02px">was </span><span style="letter-spacing:-0.17px">renamed </span><span style="letter-spacing:-0.12px">in </span><span style="display:inline-block;transform:scaleX(0.9089);transform-origin:0 50%;margin-right:-5.53px">ONE</span><span style="letter-spacing:-0.83px"> </span><span style="letter-spacing:-0.29px">Data</span></div>
<div class="cb" style="left:32px;top:367px"><svg width="28" height="28" viewBox="0 0 28 28" style="position:absolute;left:0;top:0" fill="none" stroke="#2a2a32" stroke-width="3.3"><path d="M6.05 11.95 L11.5 17.7 L22.8 6.45"/></svg></div>
<div class="t" style="left:104px;top:368px;font-size:28px;line-height:32px;color:#2e2e36;"><span style="-webkit-text-stroke:0.8px currentColor;"><span style="letter-spacing:-0.39px">An </span><span style="letter-spacing:0.33px">entity </span><span style="letter-spacing:-0.08px">was </span><span style="letter-spacing:0.03px">created </span><span style="letter-spacing:0.04px">in </span><span style="display:inline-block;transform:scaleX(0.9060);transform-origin:0 50%;margin-right:-5.70px">ONE</span><span style="letter-spacing:-0.81px"> </span><span style="letter-spacing:-0.34px">Data</span></span></div>
<div class="cb" style="left:32px;top:446px"></div>
<div class="t" style="left:104px;top:447px;font-size:28px;line-height:32px;color:#2e2e36;"><span style="letter-spacing:-0.10px">Detect </span><span style="letter-spacing:0.19px">anomalies</span></div>
<div class="cb" style="left:32px;top:525px"><svg width="28" height="28" viewBox="0 0 28 28" style="position:absolute;left:0;top:0" fill="none" stroke="#2a2a32" stroke-width="3.3"><path d="M6.05 11.95 L11.5 17.7 L22.8 6.45"/></svg></div>
<div class="t" style="left:104px;top:526px;font-size:28px;line-height:32px;color:#2e2e36;"><span style="-webkit-text-stroke:0.8px currentColor;"><span style="letter-spacing:0.30px">A </span><span style="letter-spacing:0.05px">record </span><span style="letter-spacing:-0.08px">was </span><span style="letter-spacing:0.04px">deleted </span><span style="letter-spacing:0.04px">in </span><span style="display:inline-block;transform:scaleX(0.9060);transform-origin:0 50%;margin-right:-5.70px">ONE</span><span style="letter-spacing:-0.81px"> </span><span style="letter-spacing:-0.34px">Data</span></span></div>
<div class="cb" style="left:32px;top:604px"></div>
<div class="t" style="left:104px;top:605px;font-size:28px;line-height:32px;color:#2e2e36;"><span style="letter-spacing:0.15px">A </span><span style="letter-spacing:-0.07px">record </span><span style="letter-spacing:0.02px">was </span><span style="letter-spacing:0.07px">set </span><span style="letter-spacing:-0.12px">in </span><span style="display:inline-block;transform:scaleX(0.9089);transform-origin:0 50%;margin-right:-5.53px">ONE</span><span style="letter-spacing:-0.83px"> </span><span style="letter-spacing:-0.29px">Data</span></div>
<div class="cb" style="left:32px;top:683px"></div>
<div class="t" style="left:104px;top:684px;font-size:28px;line-height:32px;color:#2e2e36;"><span style="letter-spacing:0.43px">attribute</span></div>
<div style="position:absolute;left:0;top:696px;width:612px;height:140px;background:#fff"></div>
<div class="ln" style="top:695.5px;background:#dde6eb"></div>
<div id="clear"></div>
<div class="t" style="left:66px;top:751px;font-size:28px;line-height:32px;color:#2e2e36;"><span style="-webkit-text-stroke:0.8px currentColor;"><span style="letter-spacing:-0.30px">Clear</span></span></div>
</div>

<div id="side">
<svg style="position:absolute;left:36px;top:28px" width="40" height="36" viewBox="0 0 40 36"><circle cx="16.6" cy="18" r="11.4" fill="none" stroke="#fff" stroke-width="6.2"/><rect x="28.4" y="3.8" width="7.2" height="28.6" fill="#fff"/></svg>
<div style="position:absolute;left:0;top:856px;width:112px;height:2px;background:rgba(255,255,255,.28)"></div>
<div style="position:absolute;left:0;top:960px;width:112px;height:104px;background:rgba(255,255,255,.27)"></div>
<svg class="si" style="top:154px;opacity:0.72" width="48" height="48" viewBox="0 0 24 24" fill="none" stroke="#fff" stroke-width="2" stroke-linecap="round" stroke-linejoin="round"><path d="M5 9.9 L12 5.3 L19 9.9 V19 H13.75 V13.7 H10.25 V19 H5 Z" stroke-linejoin="miter" stroke-linecap="butt"/></svg>
<svg class="si" style="top:258px;opacity:0.72" width="48" height="48" viewBox="0 0 24 24" fill="none" stroke="#fff" stroke-width="2" stroke-linecap="round" stroke-linejoin="round"><circle cx="10" cy="9.85" r="5"/><path d="M14 13.85 L18 17.85" stroke-width="2.1"/></svg>
<svg class="si" style="top:362px;opacity:0.72" width="48" height="48" viewBox="0 0 24 24" fill="none" stroke="#fff" stroke-width="2" stroke-linecap="round" stroke-linejoin="round"><path d="M12 6.6 C10.6 5.4 8.6 4.9 6.8 4.9 C5.4 4.9 4.2 5.1 3 5.5 V17.3 C4.2 17 5.4 16.8 6.8 16.8 C8.8 16.8 10.6 17.6 12 19.3 C13.4 17.6 15.2 16.8 17.2 16.8 C18.6 16.8 19.8 17 21 17.3 V5.5 C19.8 5.1 18.6 4.9 17.2 4.9 C15.4 4.9 13.4 5.4 12 6.6 Z" stroke-linejoin="miter"/><path d="M12 6.6 V18.6" stroke-linecap="butt"/></svg>
<svg class="si" style="top:466px;opacity:0.72" width="48" height="48" viewBox="0 0 24 24" fill="none" stroke="#fff" stroke-width="2" stroke-linecap="round" stroke-linejoin="round"><path d="M7 7 V3 H13.5 L14.6 4.75 H21 V15.9 H18.4"/><path d="M3 8.1 H9.2 L10.3 9.75 H17 V21 H3 Z"/><path d="M6.9 14 H10.1 M6.9 17 H13.1" stroke-width="1.8"/></svg>
<svg class="si" style="top:570px;opacity:0.72" width="48" height="48" viewBox="0 0 24 24" fill="none" stroke="#fff" stroke-width="2" stroke-linecap="round" stroke-linejoin="round"><circle cx="6.5" cy="6.5" r="3.45" stroke-width="2.1"/><circle cx="17.5" cy="17.4" r="3.45" stroke-width="2.1"/><path d="M14 3 V10 H21"/><path d="M17.2 5.5 V6.9 M19.9 5.8 V6.9" stroke-width="1.7"/><path d="M3 14 V20.9 H10"/><path d="M6 15.1 H6.9 M6 17.7 H8.7" stroke-width="1.5"/></svg>
<svg class="si" style="top:674px;opacity:0.72" width="48" height="48" viewBox="0 0 24 24" fill="none" stroke="#fff" stroke-width="2" stroke-linecap="round" stroke-linejoin="round"><path d="M12 3.75 L4 6.5 C3.9 12 5.6 16.8 12 19.95 C18.4 16.8 20.1 12 20 6.5 Z" stroke-width="1.8"/><path d="M12 3.75 L20 6.5 C20.1 12 18.4 16.8 12 19.95 Z" fill="#fff" stroke="none"/></svg>
<svg class="si" style="top:778px;opacity:0.72" width="48" height="48" viewBox="0 0 24 24" fill="none" stroke="#fff" stroke-width="2" stroke-linecap="round" stroke-linejoin="round"><path d="M19.9 8.6 V7.2 C19.9 6.4 19.5 6 18.7 6 H4 V18 H8.9"/><path d="M4 12.85 H7.3" stroke-width="1.8"/><circle cx="14.7" cy="13.5" r="4" stroke-width="1.9"/><path d="M17.7 16.6 L21 20" stroke-width="1.9"/></svg>
<svg class="si" style="top:884px;opacity:0.72" width="48" height="48" viewBox="0 0 24 24" fill="none" stroke="#fff" stroke-width="2" stroke-linecap="round" stroke-linejoin="round"><rect x="3" y="3" width="18" height="18" rx="2.4"/><circle cx="7.5" cy="8" r="1.5" fill="#fff" stroke="none"/><circle cx="7.5" cy="12" r="1.5" fill="#fff" stroke="none"/><circle cx="7.5" cy="16" r="1.5" fill="#fff" stroke="none"/><path d="M11.5 8 H17 M11.5 12 H17 M11.5 16 H17" stroke-width="1.9"/></svg>
<svg class="si" style="top:988px;opacity:1" width="48" height="48" viewBox="0 0 24 24" fill="none" stroke="#fff" stroke-width="2" stroke-linecap="round" stroke-linejoin="round"><circle cx="12" cy="12" r="8.95" stroke-width="2.1"/><ellipse cx="12" cy="12" rx="3.4" ry="8.95" stroke-width="1.85"/><path d="M3 12 H21" stroke-width="2.1"/></svg>
<svg class="si" style="top:1092px;opacity:0.72" width="48" height="48" viewBox="0 0 24 24" fill="none" stroke="#fff" stroke-width="2" stroke-linecap="round" stroke-linejoin="round"><path d="M12.00 2.90 L12.24 2.90 L12.48 2.91 L12.71 2.93 L12.95 2.96 L13.18 3.00 L13.41 3.07 L13.63 3.19 L13.83 3.40 L13.97 3.78 L14.06 4.32 L14.11 4.86 L14.20 5.24 L14.32 5.46 L14.46 5.60 L14.61 5.69 L14.77 5.78 L14.93 5.86 L15.09 5.94 L15.24 6.02 L15.40 6.11 L15.55 6.20 L15.70 6.30 L15.85 6.39 L16.00 6.49 L16.16 6.58 L16.32 6.67 L16.50 6.73 L16.76 6.72 L17.12 6.60 L17.62 6.38 L18.13 6.18 L18.53 6.12 L18.82 6.18 L19.03 6.31 L19.20 6.48 L19.35 6.66 L19.50 6.85 L19.63 7.04 L19.76 7.25 L19.88 7.45 L20.00 7.66 L20.11 7.87 L20.21 8.08 L20.30 8.30 L20.38 8.53 L20.44 8.76 L20.45 9.01 L20.36 9.28 L20.11 9.60 L19.68 9.94 L19.24 10.26 L18.95 10.52 L18.82 10.74 L18.78 10.93 L18.77 11.11 L18.77 11.29 L18.78 11.47 L18.79 11.64 L18.80 11.82 L18.80 12.00 L18.80 12.18 L18.79 12.36 L18.78 12.53 L18.77 12.71 L18.77 12.89 L18.78 13.07 L18.82 13.26 L18.95 13.48 L19.24 13.74 L19.68 14.06 L20.11 14.40 L20.36 14.72 L20.45 14.99 L20.44 15.24 L20.38 15.47 L20.30 15.70 L20.21 15.92 L20.11 16.13 L20.00 16.34 L19.88 16.55 L19.76 16.75 L19.63 16.96 L19.50 17.15 L19.35 17.34 L19.20 17.52 L19.03 17.69 L18.82 17.82 L18.53 17.88 L18.13 17.82 L17.62 17.62 L17.12 17.40 L16.76 17.28 L16.50 17.27 L16.32 17.33 L16.16 17.42 L16.00 17.51 L15.85 17.61 L15.70 17.70 L15.55 17.80 L15.40 17.89 L15.24 17.98 L15.09 18.06 L14.93 18.14 L14.77 18.22 L14.61 18.31 L14.46 18.40 L14.32 18.54 L14.20 18.76 L14.11 19.14 L14.06 19.68 L13.97 20.22 L13.83 20.60 L13.63 20.81 L13.41 20.93 L13.18 21.00 L12.95 21.04 L12.71 21.07 L12.48 21.09 L12.24 21.10 L12.00 21.10 L11.76 21.10 L11.52 21.09 L11.29 21.07 L11.05 21.04 L10.82 21.00 L10.59 20.93 L10.37 20.81 L10.17 20.60 L10.03 20.22 L9.94 19.68 L9.89 19.14 L9.80 18.76 L9.68 18.54 L9.54 18.40 L9.39 18.31 L9.23 18.22 L9.07 18.14 L8.91 18.06 L8.76 17.98 L8.60 17.89 L8.45 17.80 L8.30 17.70 L8.15 17.61 L8.00 17.51 L7.84 17.42 L7.68 17.33 L7.50 17.27 L7.24 17.28 L6.88 17.40 L6.38 17.62 L5.87 17.82 L5.47 17.88 L5.18 17.82 L4.97 17.69 L4.80 17.52 L4.65 17.34 L4.50 17.15 L4.37 16.96 L4.24 16.75 L4.12 16.55 L4.00 16.34 L3.89 16.13 L3.79 15.92 L3.70 15.70 L3.62 15.47 L3.56 15.24 L3.55 14.99 L3.64 14.72 L3.89 14.40 L4.32 14.06 L4.76 13.74 L5.05 13.48 L5.18 13.26 L5.22 13.07 L5.23 12.89 L5.23 12.71 L5.22 12.53 L5.21 12.36 L5.20 12.18 L5.20 12.00 L5.20 11.82 L5.21 11.64 L5.22 11.47 L5.23 11.29 L5.23 11.11 L5.22 10.93 L5.18 10.74 L5.05 10.52 L4.76 10.26 L4.32 9.94 L3.89 9.60 L3.64 9.28 L3.55 9.01 L3.56 8.76 L3.62 8.53 L3.70 8.30 L3.79 8.08 L3.89 7.87 L4.00 7.66 L4.12 7.45 L4.24 7.25 L4.37 7.04 L4.50 6.85 L4.65 6.66 L4.80 6.48 L4.97 6.31 L5.18 6.18 L5.47 6.12 L5.87 6.18 L6.38 6.38 L6.88 6.60 L7.24 6.72 L7.50 6.73 L7.68 6.67 L7.84 6.58 L8.00 6.49 L8.15 6.39 L8.30 6.30 L8.45 6.20 L8.60 6.11 L8.76 6.02 L8.91 5.94 L9.07 5.86 L9.23 5.78 L9.39 5.69 L9.54 5.60 L9.68 5.46 L9.80 5.24 L9.89 4.86 L9.94 4.32 L10.03 3.78 L10.17 3.40 L10.37 3.19 L10.59 3.07 L10.82 3.00 L11.05 2.96 L11.29 2.93 L11.52 2.91 L11.76 2.90 Z" stroke-width="1.85"/><circle cx="12" cy="12" r="3.05" stroke-width="1.8"/></svg>
<svg class="si" style="top:1196px;opacity:0.72" width="48" height="48" viewBox="0 0 24 24" fill="none" stroke="#fff" stroke-width="2" stroke-linecap="round" stroke-linejoin="round"><rect x="3" y="3" width="18" height="18" rx="2.4"/><path d="M7.7 11.9 L10.4 14.4 L16.2 8.7"/></svg>
<svg class="si" style="top:1300px;opacity:0.72" width="48" height="48" viewBox="0 0 24 24" fill="none" stroke="#fff" stroke-width="2" stroke-linecap="round" stroke-linejoin="round"><rect x="4" y="4" width="16" height="16" rx="1.6"/><path d="M4.5 11.85 H9 L10.9 16 L12.7 7.6 L13.8 14.4 L15 11.85 H19.5" stroke-width="1.35" stroke-linejoin="miter" stroke-linecap="butt"/></svg>
<svg class="si" style="top:1404px;opacity:0.72" width="48" height="48" viewBox="0 0 24 24" fill="none" stroke="#fff" stroke-width="2" stroke-linecap="round" stroke-linejoin="round"><path d="M6.2 14.9 C7.4 13.6 8 12.4 8 10.4 C8 7.4 9.4 5.5 12 5.5 C14.6 5.5 16 7.4 16 10.4 C16 12.4 16.6 13.6 17.8 14.9 Z" stroke-width="1.85"/><path d="M12 4.6 V5.2" stroke-width="1.8"/><path d="M8.8 18 H15.2 C14.7 19.4 13.4 20 12 20 C10.6 20 9.3 19.4 8.8 18 Z" fill="#fff" stroke="none"/></svg>
<div class="t" style="left:46.5px;top:1516px;font-size:28px;line-height:32px;color:#fff;"><span style="-webkit-text-stroke:0.8px currentColor;"><span style="letter-spacing:-0.11px">A</span></span></div>
</div>
<div id="redge"></div>
</body></html>
